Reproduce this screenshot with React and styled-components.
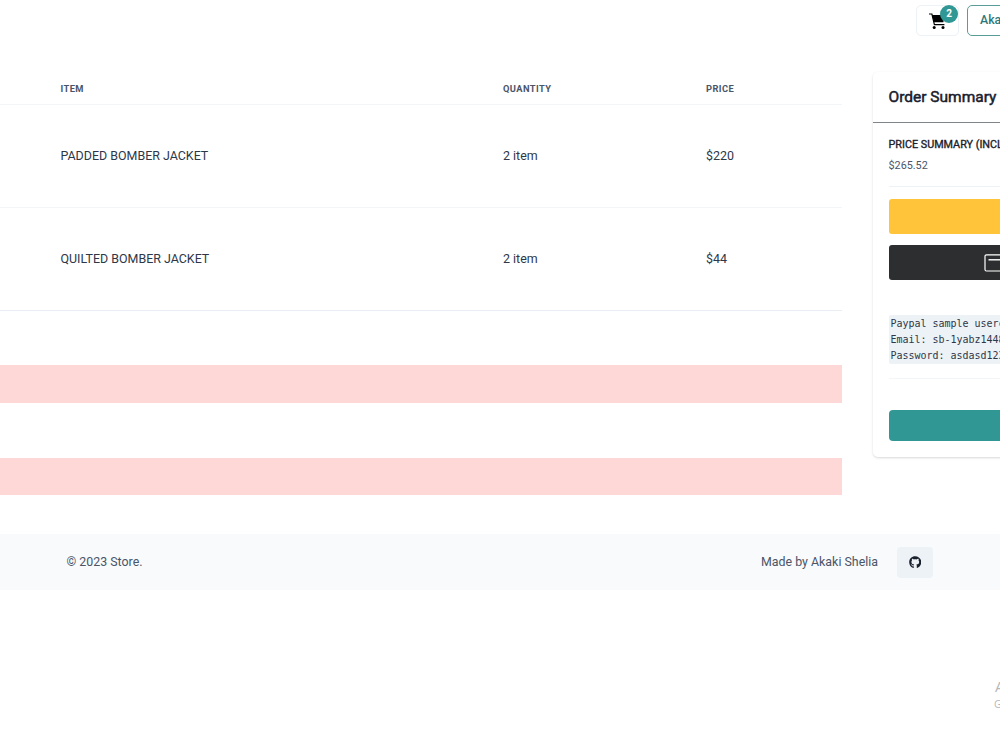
import React from 'react';
import styled, { createGlobalStyle } from 'styled-components';
import { FaGithub } from 'react-icons/fa';

const GlobalStyle = createGlobalStyle`
  * {
    box-sizing: border-box;
  }
  body {
    margin: 0;
    overflow: hidden;
    background-color: #ffffff;
    color: #1a202c;
    font-family: Roboto, sans-serif;
  }
`;

const Page = styled.div`
  position: relative;
  width: 100%;
  height: 750px;
  overflow: hidden;
  white-space: nowrap;
`;

const Header = styled.header`
  display: flex;
  gap: 8px;
  height: 72px;
  padding: 5px 0 0 916px;
`;

const CartButton = styled.button`
  position: relative;
  flex: none;
  display: flex;
  align-items: center;
  justify-content: center;
  width: 43px;
  height: 31px;
  padding: 2px 0 0;
  background: #ffffff;
  border: 1px solid #edf2f7;
  border-radius: 5px;
  color: #000000;
`;

const Badge = styled.span`
  position: absolute;
  top: -1px;
  right: 0;
  width: 18px;
  height: 18px;
  border-radius: 50%;
  background-color: #319795;
  color: #ffffff;
  font: 700 10px/18px Roboto, sans-serif;
  text-align: center;
`;

const UserButton = styled.button`
  flex: none;
  width: 90px;
  height: 31px;
  padding: 0 0 2px 12px;
  background: #ffffff;
  border: 1px solid #5a9c98;
  border-radius: 5px;
  color: #2c7a7b;
  font: 500 12.3px Roboto, sans-serif;
  text-align: left;
`;

const Main = styled.main`
  display: flex;
  align-items: flex-start;
  gap: 31px;
  height: 462px;
`;

const Cart = styled.section`
  flex: none;
  width: 842px;
`;

const Table = styled.table`
  width: 100%;
  border-collapse: separate;
  border-spacing: 0;
  table-layout: fixed;
`;

const Th = styled.th`
  width: ${(props) => props.$width}px;
  height: 33px;
  padding: 0 0 0 ${(props) => props.$indent || 0}px;
  border-bottom: 1px solid #f3f6f9;
  color: #4a5568;
  font-size: 9.3px;
  font-weight: 700;
  letter-spacing: 0.42px;
  text-align: left;
`;

const Td = styled.td`
  height: 103px;
  padding: 0 0 2px ${(props) => props.$indent || 0}px;
  border-bottom: 1px solid ${(props) => (props.$last ? '#e8eef4' : '#f3f6f9')};
  color: #2d3748;
  font-size: 12.45px;
`;

const Alert = styled.div`
  height: ${(props) => props.$height}px;
  margin-top: ${(props) => props.$gap}px;
  background-color: #fed7d7;
`;

const Card = styled.aside`
  flex: none;
  width: 280px;
  height: 385px;
  border-radius: 5px;
  box-shadow: 0 1px 3px rgba(0, 0, 0, 0.1), 0 1px 2px rgba(0, 0, 0, 0.06);
`;

const CardHeader = styled.h2`
  height: 51px;
  margin: 0;
  padding-left: 15.5px;
  border-bottom: 1px solid #7f8588;
  font-size: 15.5px;
  font-weight: 400;
  line-height: 51px;
  -webkit-text-stroke: 0.5px currentColor;
`;

const CardBody = styled.div`
  padding: 13px 15.5px;
`;

const SummaryTitle = styled.h3`
  margin: 0;
  font-size: 10.8px;
  font-weight: 400;
  line-height: 17px;
  -webkit-text-stroke: 0.35px currentColor;
`;

const Total = styled.p`
  height: 34px;
  margin: 0;
  padding-top: 4px;
  border-bottom: 1px solid #edf2f7;
  color: #4a5568;
  font-size: 10.8px;
  line-height: 18px;
`;

const PayButton = styled.button`
  display: flex;
  align-items: center;
  width: 100%;
  height: 35px;
  margin-top: ${(props) => props.$gap}px;
  padding: 0 0 0 95px;
  border: 0;
  border-radius: 3px;
  background-color: ${(props) => props.$color};
`;

const CodeBlock = styled.div`
  height: 63px;
  margin-top: 35px;
`;

const Code = styled.code`
  display: inline-block;
  height: 49px;
  padding: 1px 2px 0;
  background-color: #edf2f7;
  border-radius: 2px;
  color: #2d3748;
  font-family: 'DejaVu Sans Mono', monospace;
  font-size: 9.97px;
  line-height: 16px;
`;

const PayDivider = styled.div`
  height: 1px;
  margin: 0 0 31px;
  background-color: #f3f6f9;
`;

const PrimaryButton = styled.button`
  display: block;
  width: 100%;
  height: 31px;
  border: 0;
  border-radius: 4px;
  background-color: #319795;
`;

const Footer = styled.footer`
  display: flex;
  align-items: center;
  justify-content: space-between;
  height: 56px;
  padding: 0 67px 0 66.5px;
  background-color: #f8fafc;
  color: #4a5568;
  font-size: 12.4px;
`;

const FooterText = styled.span`
  padding-bottom: 2px;
`;

const Author = styled.div`
  display: flex;
  align-items: center;
  gap: 19px;
`;

const GithubButton = styled.a`
  display: flex;
  align-items: center;
  justify-content: center;
  width: 36px;
  height: 31px;
  border-radius: 4px;
  background-color: #edf2f7;
  color: #1a202c;
  font-size: 12.5px;
`;

const Watermark = styled.div`
  position: absolute;
  top: 677px;
  left: 995px;
  color: #b8b8b8;
  font-family: 'Open Sans', sans-serif;
  font-size: 15px;
  line-height: 18px;
`;

const WatermarkSub = styled.div`
  margin-left: -1px;
  font-size: 10.5px;
  line-height: 18px;
`;

const items = [
  { name: 'PADDED BOMBER JACKET', quantity: 2, price: 220 },
  { name: 'QUILTED BOMBER JACKET', quantity: 2, price: 44 },
];

const CartIcon = () => (
  <svg width="17" height="17" viewBox="0 0 17 17">
    <path d="M0 1H2.9L5.4 11.6H15.4" fill="none" stroke="currentColor" strokeWidth="1.2" />
    <path d="M3 1.9H16.1L14.3 9.2H5Z" fill="currentColor" />
    <circle cx="5.2" cy="14.6" r="1.5" fill="currentColor" />
    <circle cx="14" cy="14.6" r="1.5" fill="currentColor" />
  </svg>
);

const CardIcon = () => (
  <svg width="26" height="18" viewBox="0 0 26 18" fill="none" stroke="#ffffff">
    <rect x="1" y="0.8" width="24" height="16.2" rx="1.5" strokeWidth="1.2" />
    <path d="M4.5 5.8H22" strokeWidth="1.4" />
  </svg>
);

const App = () => {
  return (
    <Page>
      <GlobalStyle />
      <Header>
        <CartButton>
          <CartIcon />
          <Badge>2</Badge>
        </CartButton>
        <UserButton>Akaki</UserButton>
      </Header>
      <Main>
        <Cart>
          <Table>
            <thead>
              <tr>
                <Th $width={503} $indent={60.5}>ITEM</Th>
                <Th $width={203}>QUANTITY</Th>
                <Th $width={136}>PRICE</Th>
              </tr>
            </thead>
            <tbody>
              {items.map((item, index) => {
                const last = index === items.length - 1;
                return (
                  <tr key={item.name}>
                    <Td $indent={60.5} $last={last}>{item.name}</Td>
                    <Td $last={last}>{item.quantity} item</Td>
                    <Td $last={last}>${item.price}</Td>
                  </tr>
                );
              })}
            </tbody>
          </Table>
          <Alert $height={38} $gap={54} />
          <Alert $height={37} $gap={55} />
        </Cart>
        <Card>
          <CardHeader>Order Summary</CardHeader>
          <CardBody>
            <SummaryTitle>PRICE SUMMARY (INCLUDING TAX)</SummaryTitle>
            <Total>$265.52</Total>
            <PayButton $gap={12} $color="#ffc439" />
            <PayButton $gap={11} $color="#2c2e2f">
              <CardIcon />
            </PayButton>
            <CodeBlock>
              <Code>
                Paypal sample usercase
                <br />
                Email: sb-1yabz1448
                <br />
                Password: asdasd123
              </Code>
            </CodeBlock>
            <PayDivider />
            <PrimaryButton />
          </CardBody>
        </Card>
      </Main>
      <Footer>
        <FooterText>© 2023 Store.</FooterText>
        <Author>
          <FooterText>Made by Akaki Shelia</FooterText>
          <GithubButton>
            <FaGithub />
          </GithubButton>
        </Author>
      </Footer>
      <Watermark>
        Activate Windows
        <WatermarkSub>Go to Settings to activate Windows.</WatermarkSub>
      </Watermark>
    </Page>
  );
};

export default App;
